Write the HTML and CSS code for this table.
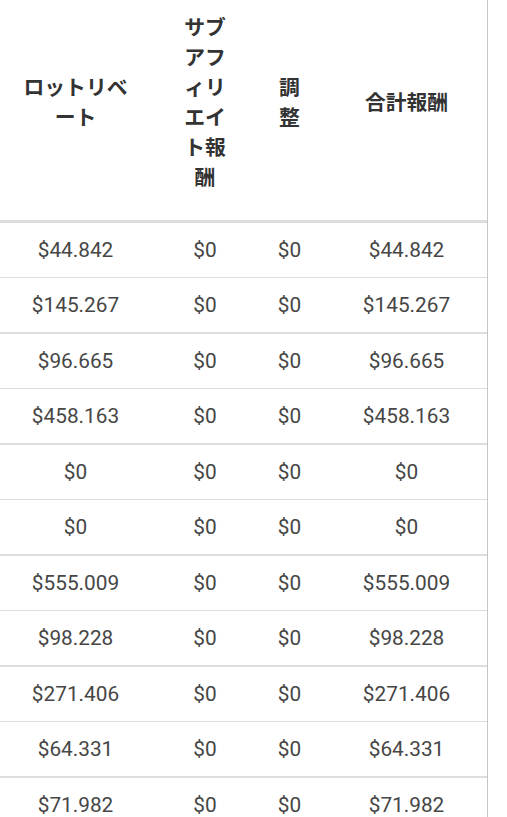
FILE: index.html
```html
<!DOCTYPE html>
<html lang="ja">
<head>
<meta charset="utf-8">
<link rel="stylesheet" href="styles.css">
</head>
<body>
<div class="wrap">
<table class="tbl">
<colgroup>
<col class="c1"><col class="c2"><col class="c3"><col class="c4">
</colgroup>
<thead>
<tr>
<th><span class="hd hd1">ロットリベート</span></th>
<th><span class="hd hd2">サブアフィリエイト報酬</span></th>
<th><span class="hd hd3">調整</span></th>
<th class="last"><span class="hd">合計報酬</span></th>
</tr>
</thead>
<tbody>
<tr><td>$44.842</td><td>$0</td><td>$0</td><td class="last">$44.842</td></tr>
<tr class="even"><td>$145.267</td><td>$0</td><td>$0</td><td class="last">$145.267</td></tr>
<tr><td>$96.665</td><td>$0</td><td>$0</td><td class="last">$96.665</td></tr>
<tr class="even"><td>$458.163</td><td>$0</td><td>$0</td><td class="last">$458.163</td></tr>
<tr><td>$0</td><td>$0</td><td>$0</td><td class="last">$0</td></tr>
<tr class="even"><td>$0</td><td>$0</td><td>$0</td><td class="last">$0</td></tr>
<tr><td>$555.009</td><td>$0</td><td>$0</td><td class="last">$555.009</td></tr>
<tr class="even"><td>$98.228</td><td>$0</td><td>$0</td><td class="last">$98.228</td></tr>
<tr><td>$271.406</td><td>$0</td><td>$0</td><td class="last">$271.406</td></tr>
<tr class="even"><td>$64.331</td><td>$0</td><td>$0</td><td class="last">$64.331</td></tr>
<tr><td>$71.982</td><td>$0</td><td>$0</td><td class="last">$71.982</td></tr>
</tbody>
</table>
</div>
</body>
</html>
```
FILE: styles.css
```css
html, body {
  margin: 0;
  padding: 0;
  background: #ffffff;
}
.wrap {
  width: 487px;
  border-right: 1px solid #c6c6c6;
  min-height: 817px;
}
.tbl {
  width: 487px;
  table-layout: fixed;
  border-collapse: separate;
  border-spacing: 0;
}
.c1 { width: 151px; }
.c2 { width: 108px; }
.c3 { width: 61px; }
.c4 { width: 167px; }
.tbl th {
  font-family: "Noto Sans CJK JP", "Noto Sans", sans-serif;
  font-weight: 700;
  font-size: 20.8px;
  line-height: 30px;
  color: #333333;
  text-align: center;
  vertical-align: middle;
  padding: 11px 0 29px 0;
  height: 180px;
  border-bottom: 3px solid #dddddd;
}
.hd {
  display: inline-block;
  text-align: center;
  line-break: anywhere;
  word-break: break-all;
}
.hd1 { width: 106px; }
.hd2 { width: 44px; }
.hd3 { width: 22px; }
.tbl td {
  font-family: Roboto, "Liberation Sans", sans-serif;
  font-size: 20.8px;
  line-height: 24px;
  color: #464646;
  text-align: center;
  padding: 15px 0;
  border-bottom: 1px solid #dddddd;
}
.tbl tr.even td {
  border-bottom-width: 2px;
}
.tbl .last {
  padding-left: 6px;
}
```
